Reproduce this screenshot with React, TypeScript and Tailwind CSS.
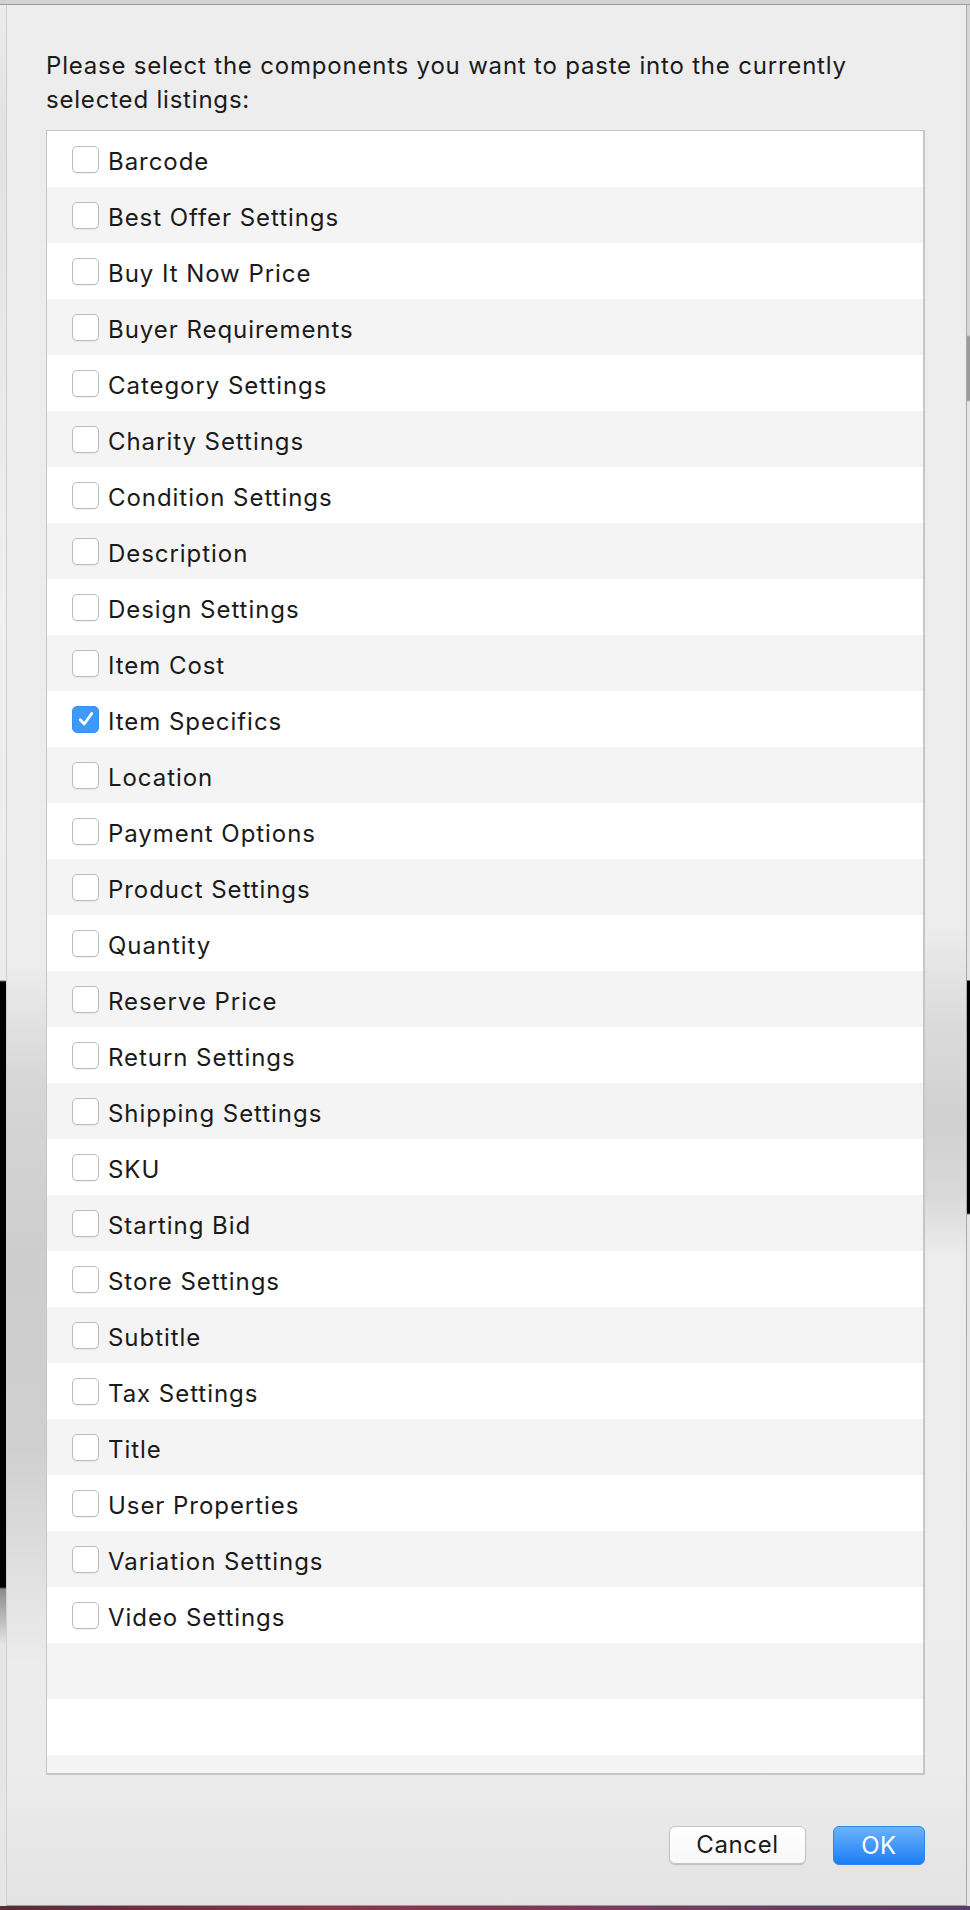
import React from "react";

const componentes = [
  "Barcode",
  "Best Offer Settings",
  "Buy It Now Price",
  "Buyer Requirements",
  "Category Settings",
  "Charity Settings",
  "Condition Settings",
  "Description",
  "Design Settings",
  "Item Cost",
  "Item Specifics",
  "Location",
  "Payment Options",
  "Product Settings",
  "Quantity",
  "Reserve Price",
  "Return Settings",
  "Shipping Settings",
  "SKU",
  "Starting Bid",
  "Store Settings",
  "Subtitle",
  "Tax Settings",
  "Title",
  "User Properties",
  "Variation Settings",
  "Video Settings",
];

const Checkbox = ({ checked }: { checked?: boolean }) =>
  checked ? (
    <span className="w-[27px] h-[27px] shrink-0 rounded-[5px] bg-[#3d9afb] border border-[#3a8df2] flex items-center justify-center">
      <svg width="20" height="20" viewBox="0 0 20 20" fill="none">
        <path d="M4.2 10.8 L8.2 15 L15.8 4.4" stroke="white" strokeWidth="2.7" strokeLinecap="round" strokeLinejoin="round" />
      </svg>
    </span>
  ) : (
    <span className="w-[27px] h-[27px] shrink-0 rounded-[5px] bg-white border border-[#bcbcbc] shadow-[0_1px_1px_rgba(0,0,0,0.06)]" />
  );

export default function App() {
  const [marcados, setMarcados] = React.useState<string[]>(["Item Specifics"]);
  const filas = [...componentes, "", "", ""];

  const toggle = (n: string) =>
    setMarcados((m) => (m.includes(n) ? m.filter((x) => x !== n) : [...m, n]));

  return (
    <div className="w-[970px] h-[1910px] flex flex-col overflow-hidden bg-[#e8e8e8] font-['Inter','Liberation_Sans',sans-serif] text-[#1a1a1a]">
      {/* ventana de fondo arriba */}
      <div className="h-[5px] shrink-0 bg-[#d2d2d2] border-b border-[#9c9c9c]" />

      <div className="flex flex-1 min-h-0">
        {/* franja izquierda de la ventana de fondo */}
        <div className="w-[6px] shrink-0 bg-[linear-gradient(to_bottom,#ececec_0px,#e2e2e2_120px,#f0f0f0_600px,#ececec_975px,#000_977px,#000_1582px,#8a8a8a_1584px,#e6e6e6_1640px,#e6e6e6_100%)]" />

        {/* hoja */}
        <div className="flex-1 flex border-l border-[#cfcfcf] border-r border-r-[#a9a9a9] border-b border-b-[#9a9a9a] bg-[linear-gradient(to_bottom,#ededed_0px,#ececec_1760px,#e3e3e3_100%)]">
          <div className="w-[39px] shrink-0 bg-[linear-gradient(to_bottom,transparent_960px,#d6d6d6_1080px,#cdcdcd_1250px,#cfcfcf_1440px,transparent_1660px)]" />

          <div className="w-[879px] flex flex-col">
            <p className="mt-[44px] text-[24px] leading-[34px] tracking-[0.8px]">
              Please select the components you want to paste into the currently selected listings:
            </p>

            <div className="mt-[13px] h-[1645px] bg-white border-t border-l border-r-2 border-b-2 border-[#c6c6c6] overflow-hidden">
              {filas.map((nombre, i) => (
                <div
                  key={i}
                  onClick={() => nombre && toggle(nombre)}
                  className={`h-[56px] flex items-center pl-[25px] ${i % 2 === 0 ? "bg-white" : "bg-[#f4f4f4]"}`}
                >
                  {nombre && (
                    <>
                      <Checkbox checked={marcados.includes(nombre)} />
                      <span className="ml-[9px] pt-[5px] text-[24px] tracking-[0.95px]">{nombre}</span>
                    </>
                  )}
                </div>
              ))}
            </div>

            <div className="mt-[51px] flex justify-end gap-[27px]">
              <button className="w-[137px] h-[38px] rounded-[6px] bg-[linear-gradient(to_bottom,#ffffff,#f8f8f8)] border border-[#c4c4c4] shadow-[0_1px_1px_rgba(0,0,0,0.18)] text-[24px] text-[#1a1a1a] tracking-[0.6px]">
                Cancel
              </button>
              <button className="w-[92px] h-[39px] rounded-[6px] bg-[linear-gradient(to_bottom,#6db2f9,#1a7ff6)] border border-[#2f86ee] text-[24px] text-white tracking-[0.6px]">
                OK
              </button>
            </div>
          </div>

          <div className="flex-1 bg-[linear-gradient(to_bottom,transparent_920px,#dadada_1020px,#d0d0d0_1118px,#d8d8d8_1190px,transparent_1250px)]" />
        </div>

        {/* franja derecha */}
        <div className="w-[3px] shrink-0 bg-[linear-gradient(to_bottom,#d6d6d6_0px,#d6d6d6_330px,#9a9a9a_332px,#9a9a9a_395px,#e4e4e4_397px,#e4e4e4_975px,#000_976px,#000_1208px,#e6e6e6_1210px,#e6e6e6_100%)]" />
      </div>

      <div className="h-[4px] shrink-0 bg-[linear-gradient(to_right,#5d2a3a,#8a3646,#7b3b62,#5e3c6a)]" />
    </div>
  );
}
